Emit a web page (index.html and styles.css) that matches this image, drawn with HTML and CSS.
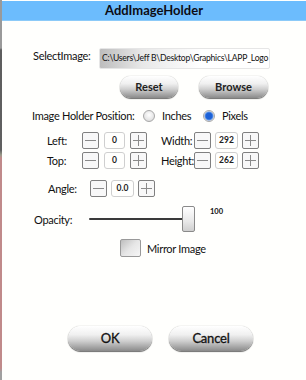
FILE: index.html
```html
<!DOCTYPE html>
<html>
<head>
<meta charset="utf-8">
<link rel="stylesheet" href="styles.css">
</head>
<body>
<div class="edge"></div>
<div class="dialog">
  <div class="titlebar">AddImageHolder</div>
  <div class="content">
    <div class="row-select">
      <span class="lbl lbl-select">SelectImage:</span>
      <div class="pathbox">C:\Users\Jeff B\Desktop\Graphics\LAPP_Logo</div>
    </div>
    <div class="row-buttons">
      <button class="pill btn-reset">Reset</button>
      <button class="pill btn-browse">Browse</button>
    </div>
    <div class="row-position">
      <span class="lbl lbl-pos">Image Holder Position:</span>
      <span class="radio"></span><span class="lbl opt-inches">Inches</span>
      <span class="radio checked"></span><span class="lbl">Pixels</span>
    </div>
    <div class="spin-row row-left">
      <span class="lbl lbl-a">Left:</span>
      <span class="sbtn minus"></span><span class="val">0</span><span class="sbtn plus"></span>
      <span class="lbl lbl-b">Width:</span>
      <span class="sbtn minus"></span><span class="val val-wide">292</span><span class="sbtn plus"></span>
    </div>
    <div class="spin-row row-top">
      <span class="lbl lbl-a">Top:</span>
      <span class="sbtn minus"></span><span class="val">0</span><span class="sbtn plus"></span>
      <span class="lbl lbl-b">Height:</span>
      <span class="sbtn minus"></span><span class="val val-wide">262</span><span class="sbtn plus"></span>
    </div>
    <div class="spin-row row-angle">
      <span class="lbl lbl-angle">Angle:</span>
      <span class="sbtn minus"></span><span class="val val-wide">0.0</span><span class="sbtn plus"></span>
    </div>
    <div class="row-opacity">
      <span class="lbl lbl-opacity">Opacity:</span>
      <div class="slider">
        <div class="track"></div>
        <div class="thumb"></div>
      </div>
      <span class="opval">100</span>
    </div>
    <div class="row-mirror">
      <span class="check"></span><span class="lbl">Mirror Image</span>
    </div>
    <div class="row-ok">
      <button class="pill big">OK</button>
      <button class="pill big">Cancel</button>
    </div>
  </div>
</div>
</body>
</html>
```
FILE: styles.css
```css
html, body {
  margin: 0;
  padding: 0;
  height: 380px;
  overflow: hidden;
}
body {
  display: flex;
  background: #fffffd;
  font-family: Lato, "Open Sans", sans-serif;
  color: #111;
}
.edge {
  width: 2px;
  flex: none;
  background: linear-gradient(to bottom, #9a9a9a 0, #9a9a9a 48px, #5e5e5e 50px, #606060 150px, #9a9a8a 155px, #c08a8a 158px, #c08a8a 368px, #a0a0a0 372px);
}
.dialog {
  flex: 1;
  display: flex;
  flex-direction: column;
}
.titlebar {
  margin-top: 1px;
  height: 19px;
  background: #6cbcfd;
  border-bottom: 1px solid #8ccaf8;
  text-align: center;
  font-weight: bold;
  font-size: 13px;
  line-height: 19px;
  color: #0c0c14;
}
.content {
  display: flex;
  flex-direction: column;
}
.lbl {
  font-size: 11px;
  letter-spacing: -0.3px;
  color: #111;
  white-space: nowrap;
}
.row-select {
  display: flex;
  align-items: center;
  margin-top: 27px;
  height: 21px;
}
.lbl-select {
  margin-left: 31px;
  width: 66px;
  position: relative;
  top: -3px;
}
.pathbox {
  width: 171px;
  height: 21px;
  box-sizing: border-box;
  background: linear-gradient(to right, #bdbdbd 0, #e8e8e8 25%, #ffffff 60%);
  border-radius: 2px;
  border: 1px solid #e6e6e6;
  font-size: 8.6px;
  letter-spacing: -0.25px;
  line-height: 19px;
  padding-left: 2px;
  white-space: nowrap;
  overflow: hidden;
  color: #111;
}
.row-buttons {
  display: flex;
  margin-top: 7px;
  margin-left: 118px;
  gap: 21px;
}
.pill {
  font-family: Lato, "Open Sans", sans-serif;
  font-weight: bold;
  font-size: 11px;
  color: #222;
  border: none;
  border-radius: 11px;
  height: 22px;
  padding: 0;
  background: linear-gradient(to bottom, #ffffff 0, #f0f0f0 35%, #cfcfcf 60%, #8a8a8a 100%);
  box-shadow: 0 1px 1px rgba(0,0,0,0.55), 0 0 1px rgba(0,0,0,0.4);
  line-height: 20px;
}
.btn-reset { width: 58px; }
.btn-browse { width: 69px; }
.row-position {
  display: flex;
  align-items: center;
  margin-top: 10px;
  height: 14px;
}
.lbl-pos {
  margin-left: 30px;
  width: 111px;
}
.radio {
  width: 12px;
  height: 12px;
  box-sizing: border-box;
  border-radius: 50%;
  border: 1px solid #a8a8a8;
  background: radial-gradient(circle at 50% 40%, #ffffff 0, #e6e6e6 60%, #cfcfcf 100%);
  margin-right: 7px;
  position: relative;
  top: 1px;
}
.radio.checked {
  background: radial-gradient(circle, #1b5fd6 0, #1d63d8 3px, #5f95e6 4px, #e8e8e8 5px, #cfcfcf 100%);
}
.opt-inches {
  width: 41px;
}
.spin-row {
  display: flex;
  align-items: center;
  height: 16px;
}
.row-left { margin-top: 10px; }
.row-top { margin-top: 4px; }
.row-angle { margin-top: 12px; }
.lbl-a {
  margin-left: 45px;
  width: 35px;
}
.lbl-b {
  margin-left: 14px;
  width: 33px;
}
.lbl-angle {
  margin-left: 46px;
  width: 42px;
}
.sbtn {
  width: 17px;
  height: 17px;
  box-sizing: border-box;
  border: 1px solid #808080;
  border-radius: 2px;
  background: #f8f8f8;
  position: relative;
}
.sbtn::before {
  content: "";
  position: absolute;
  left: 2px;
  right: 2px;
  top: 7px;
  height: 1px;
  background: #8a8a8a;
}
.sbtn.plus::after {
  content: "";
  position: absolute;
  top: 2px;
  bottom: 2px;
  left: 7px;
  width: 1px;
  background: #8a8a8a;
}
.val {
  width: 21px;
  height: 17px;
  box-sizing: border-box;
  border: 1px solid #cfcfcf;
  border-radius: 3px;
  margin: 0 5px;
  font-size: 8.5px;
  font-weight: bold;
  text-align: center;
  line-height: 15px;
  color: #222;
}
.val-wide {
  width: 23px;
  margin: 0 4px;
}
.row-opacity {
  display: flex;
  align-items: center;
  margin-top: 10px;
  height: 26px;
}
.lbl-opacity {
  margin-left: 32px;
  width: 55px;
}
.slider {
  width: 106px;
  height: 26px;
  display: flex;
  align-items: center;
  position: relative;
}
.track {
  width: 94px;
  height: 2px;
  background: #3a3a3a;
  border-radius: 1px;
}
.thumb {
  width: 13px;
  height: 26px;
  box-sizing: border-box;
  border: 1px solid #8a8a8a;
  border-radius: 2px;
  background: linear-gradient(to bottom, #ffffff 0, #e8e8e8 60%, #cfcfcf 100%);
  margin-left: -1px;
}
.opval {
  font-size: 7.5px;
  font-weight: bold;
  margin-left: 15px;
  align-self: flex-start;
  margin-top: 1px;
  color: #111;
}
.row-mirror {
  display: flex;
  align-items: center;
  margin-top: 7px;
  height: 18px;
}
.check {
  margin-left: 118px;
  width: 21px;
  height: 18px;
  box-sizing: border-box;
  border: 1px solid #999;
  border-radius: 2px;
  background: linear-gradient(135deg, #bdbdbd 0, #e6e6e6 50%, #f6f6f6 100%);
  margin-right: 6px;
}
.row-ok {
  display: flex;
  margin-top: 69px;
  margin-left: 66px;
  gap: 17px;
}
.pill.big {
  width: 84px;
  height: 25px;
  border-radius: 13px;
  font-size: 13px;
  font-weight: normal;
  line-height: 23px;
  color: #111;
  letter-spacing: -0.2px;
  -webkit-text-stroke: 0.3px #111;
}
```
